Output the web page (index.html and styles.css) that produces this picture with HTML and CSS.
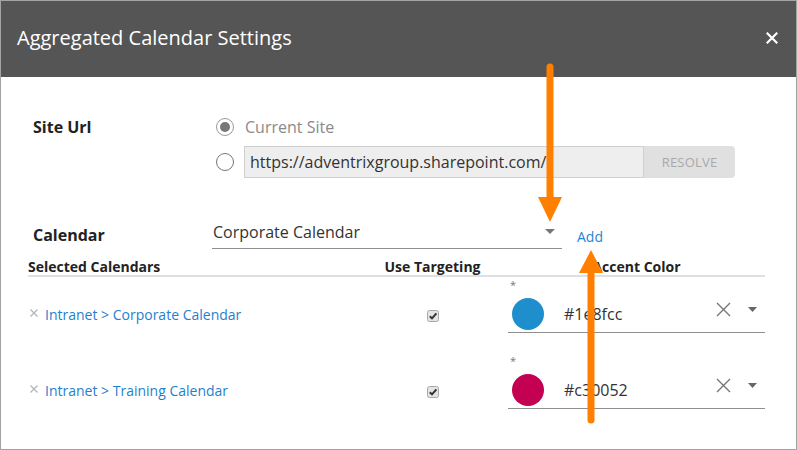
FILE: index.html
```html
<!DOCTYPE html>
<html lang="en">
<head>
<meta charset="utf-8">
<title>Aggregated Calendar Settings</title>
<link rel="stylesheet" href="styles.css">
</head>
<body>
<div class="dialog">
  <header class="dlg-head">
    <h1 class="dlg-title">Aggregated Calendar Settings</h1>
    <span class="close" aria-label="Close">
      <svg width="12" height="12" viewBox="0 0 12 12"><path d="M1.5 1.5L10.5 10.5M10.5 1.5L1.5 10.5" stroke="#fff" stroke-width="2.2" stroke-linecap="square"/></svg>
    </span>
  </header>

  <main class="dlg-body">
    <section class="form-grid">
      <div class="label label-site">Site Url</div>
      <div class="site-options">
        <div class="radio-row">
          <span class="radio checked"><span class="dot"></span></span>
          <span class="radio-text">Current Site</span>
        </div>
        <div class="radio-row url-row">
          <span class="radio"></span>
          <div class="url-field">
            <span class="url-input">https://adventrixgroup.sharepoint.com/</span>
            <span class="resolve">RESOLVE</span>
          </div>
        </div>
      </div>

      <div class="label label-cal">Calendar</div>
      <div class="cal-row">
        <div class="dropdown">
          <span class="dd-text">Corporate Calendar</span>
          <svg class="caret" width="10" height="5" viewBox="0 0 10 5"><path d="M0 0H10L5 5Z" fill="#777"/></svg>
        </div>
        <a class="add">Add</a>
      </div>
    </section>

    <section class="table">
      <div class="thead">
        <div class="th th-left">Selected Calendars</div>
        <div class="th th-center">Use Targeting</div>
        <div class="th th-center">Accent Color</div>
      </div>

      <div class="trow">
        <div class="cell cell-name">
          <svg class="rm" width="8" height="8" viewBox="0 0 8 8"><path d="M0.5 0.5L7.5 7.5M7.5 0.5L0.5 7.5" stroke="#b5b5b5" stroke-width="1.3"/></svg>
          <a class="cal-link">Intranet &gt; Corporate Calendar</a>
        </div>
        <div class="cell cell-check">
          <svg width="12" height="12" viewBox="0 0 12 12"><rect x="0.5" y="0.5" width="11" height="11" rx="2" fill="#e4e4e4" stroke="#a8a8a8"/><path d="M2.8 6.2L5 8.4L9.4 3.4" fill="none" stroke="#333" stroke-width="2"/></svg>
        </div>
        <div class="cell cell-color">
          <div class="req">*</div>
          <div class="picker">
            <span class="swatch" style="background:#1e8fcc"></span>
            <span class="hex">#1e8fcc</span>
            <svg class="clear" width="15" height="15" viewBox="0 0 15 15"><path d="M1 1L14 14M14 1L1 14" stroke="#777" stroke-width="1.4"/></svg>
            <svg class="pcaret" width="9" height="5" viewBox="0 0 9 5"><path d="M0 0H9L4.5 5Z" fill="#666"/></svg>
          </div>
        </div>
      </div>

      <div class="trow">
        <div class="cell cell-name">
          <svg class="rm" width="8" height="8" viewBox="0 0 8 8"><path d="M0.5 0.5L7.5 7.5M7.5 0.5L0.5 7.5" stroke="#b5b5b5" stroke-width="1.3"/></svg>
          <a class="cal-link">Intranet &gt; Training Calendar</a>
        </div>
        <div class="cell cell-check">
          <svg width="12" height="12" viewBox="0 0 12 12"><rect x="0.5" y="0.5" width="11" height="11" rx="2" fill="#e4e4e4" stroke="#a8a8a8"/><path d="M2.8 6.2L5 8.4L9.4 3.4" fill="none" stroke="#333" stroke-width="2"/></svg>
        </div>
        <div class="cell cell-color">
          <div class="req">*</div>
          <div class="picker">
            <span class="swatch" style="background:#c30052"></span>
            <span class="hex">#c30052</span>
            <svg class="clear" width="15" height="15" viewBox="0 0 15 15"><path d="M1 1L14 14M14 1L1 14" stroke="#777" stroke-width="1.4"/></svg>
            <svg class="pcaret" width="9" height="5" viewBox="0 0 9 5"><path d="M0 0H9L4.5 5Z" fill="#666"/></svg>
          </div>
        </div>
      </div>
    </section>
  </main>

  <svg class="annot" width="797" height="450" viewBox="0 0 797 450">
    <line x1="550" y1="67" x2="550" y2="200" stroke="#ff8000" stroke-width="7" stroke-linecap="round"/>
    <polygon points="538,197 562,197 550,222" fill="#ff8000"/>
    <line x1="591" y1="420" x2="591" y2="270" stroke="#ff8000" stroke-width="7" stroke-linecap="round"/>
    <polygon points="579,273 603,273 591,250" fill="#ff8000"/>
  </svg>
</div>
</body>
</html>
```

FILE: styles.css
```css
* { box-sizing: border-box; }

html, body {
  margin: 0;
  padding: 0;
  background: #fff;
}

body {
  font-family: "Open Sans", "Noto Sans", sans-serif;
  color: #333;
}

.dialog {
  position: relative;
  width: 797px;
  height: 450px;
  border: 1px solid #a3a3a3;
  background: #fff;
  display: flex;
  flex-direction: column;
  overflow: hidden;
}

.dlg-head {
  height: 76px;
  background: #555555;
  display: flex;
  align-items: center;
  justify-content: space-between;
  padding: 0 18px 0 16px;
  flex-shrink: 0;
}

.dlg-title {
  margin: 0;
  font-size: 20px;
  font-weight: 400;
  color: #fff;
  line-height: 1;
  padding-bottom: 2px;
}

.close {
  display: flex;
  width: 12px;
  height: 12px;
  margin-bottom: 2px;
}

.dlg-body {
  padding: 38px 31px 0 27px;
  display: flex;
  flex-direction: column;
}

.form-grid {
  display: grid;
  grid-template-columns: 179px 1fr;
  padding-left: 5px;
  row-gap: 38px;
}

.label {
  font-size: 16px;
  font-weight: 700;
  color: #222;
  line-height: 24px;
}

.label-cal {
  padding-top: 7px;
}

.site-options {
  display: flex;
  flex-direction: column;
  gap: 7px;
  padding-left: 4px;
}

.radio-row {
  display: flex;
  align-items: center;
  height: 24px;
}

.url-row {
  height: 32px;
}

.radio {
  width: 18px;
  height: 18px;
  border-radius: 50%;
  border: 1.5px solid #777;
  display: flex;
  align-items: center;
  justify-content: center;
  flex-shrink: 0;
}

.radio.checked {
  border-color: #9a9a9a;
}

.radio .dot {
  width: 10px;
  height: 10px;
  border-radius: 50%;
  background: #777;
}

.radio-text {
  margin-left: 11px;
  font-size: 16px;
  color: #8a8a8a;
}

.url-field {
  margin-left: 10px;
  display: flex;
  height: 32px;
}

.url-input {
  width: 399px;
  height: 32px;
  background: #eeeeee;
  border: 1px solid #cfcfcf;
  border-right: none;
  font-size: 16px;
  color: #333;
  line-height: 30px;
  padding-left: 5px;
  white-space: nowrap;
  overflow: hidden;
}

.resolve {
  width: 92px;
  height: 32px;
  background: #e0e0e0;
  border-left: 1px solid #d0d0d0;
  border-radius: 0 4px 4px 0;
  color: #a9a9a9;
  font-size: 13px;
  line-height: 32px;
  text-align: center;
  letter-spacing: 0.2px;
}

.cal-row {
  display: flex;
  align-items: flex-end;
}

.dropdown {
  width: 350px;
  height: 33px;
  border-bottom: 1px solid #8f8f8f;
  display: flex;
  align-items: center;
  justify-content: space-between;
  padding: 0 7px 0 1px;
}

.dd-text {
  font-size: 16px;
  color: #333;
}

.caret {
  margin-top: -2px;
}

.add {
  margin-left: 15px;
  font-size: 14px;
  color: #1f86d6;
  line-height: 20px;
  margin-bottom: 2px;
}

.table {
  margin-top: 9px;
}

.thead {
  display: grid;
  grid-template-columns: 329px 151px 1fr;
  height: 19px;
  border-bottom: 2px solid #e0e0e0;
  align-items: center;
}

.th {
  font-size: 14px;
  font-weight: 700;
  color: #222;
  line-height: 17px;
}

.th-center {
  text-align: center;
}

.trow {
  display: grid;
  grid-template-columns: 329px 151px 1fr;
  height: 76px;
}

.cell {
  display: flex;
  align-items: center;
}

.cell-name {
  padding-left: 2px;
  padding-bottom: 2px;
}

.rm {
  margin-right: 7px;
  margin-top: -3px;
}

.cal-link {
  font-size: 14px;
  color: #1f80cf;
}

.cell-check {
  justify-content: center;
  padding-left: 1px;
}

.cell-check svg {
  margin-top: 1px;
}

.cell-color {
  flex-direction: column;
  align-items: stretch;
  padding-top: 2px;
}

.req {
  height: 11px;
  font-size: 11px;
  line-height: 11px;
  color: #777;
  padding-left: 2px;
}

.picker {
  height: 43px;
  border-bottom: 1px solid #8f8f8f;
  display: flex;
  align-items: center;
  padding: 5px 0 0 4px;
}

.swatch {
  width: 32px;
  height: 32px;
  border-radius: 50%;
  flex-shrink: 0;
}

.hex {
  margin-left: 20px;
  font-size: 16px;
  color: #333;
  flex: 1;
}

.clear {
  margin-top: -8px;
}

.pcaret {
  margin: -8px 8px 0 17px;
}

.annot {
  position: absolute;
  left: -1px;
  top: -1px;
  pointer-events: none;
}
```
